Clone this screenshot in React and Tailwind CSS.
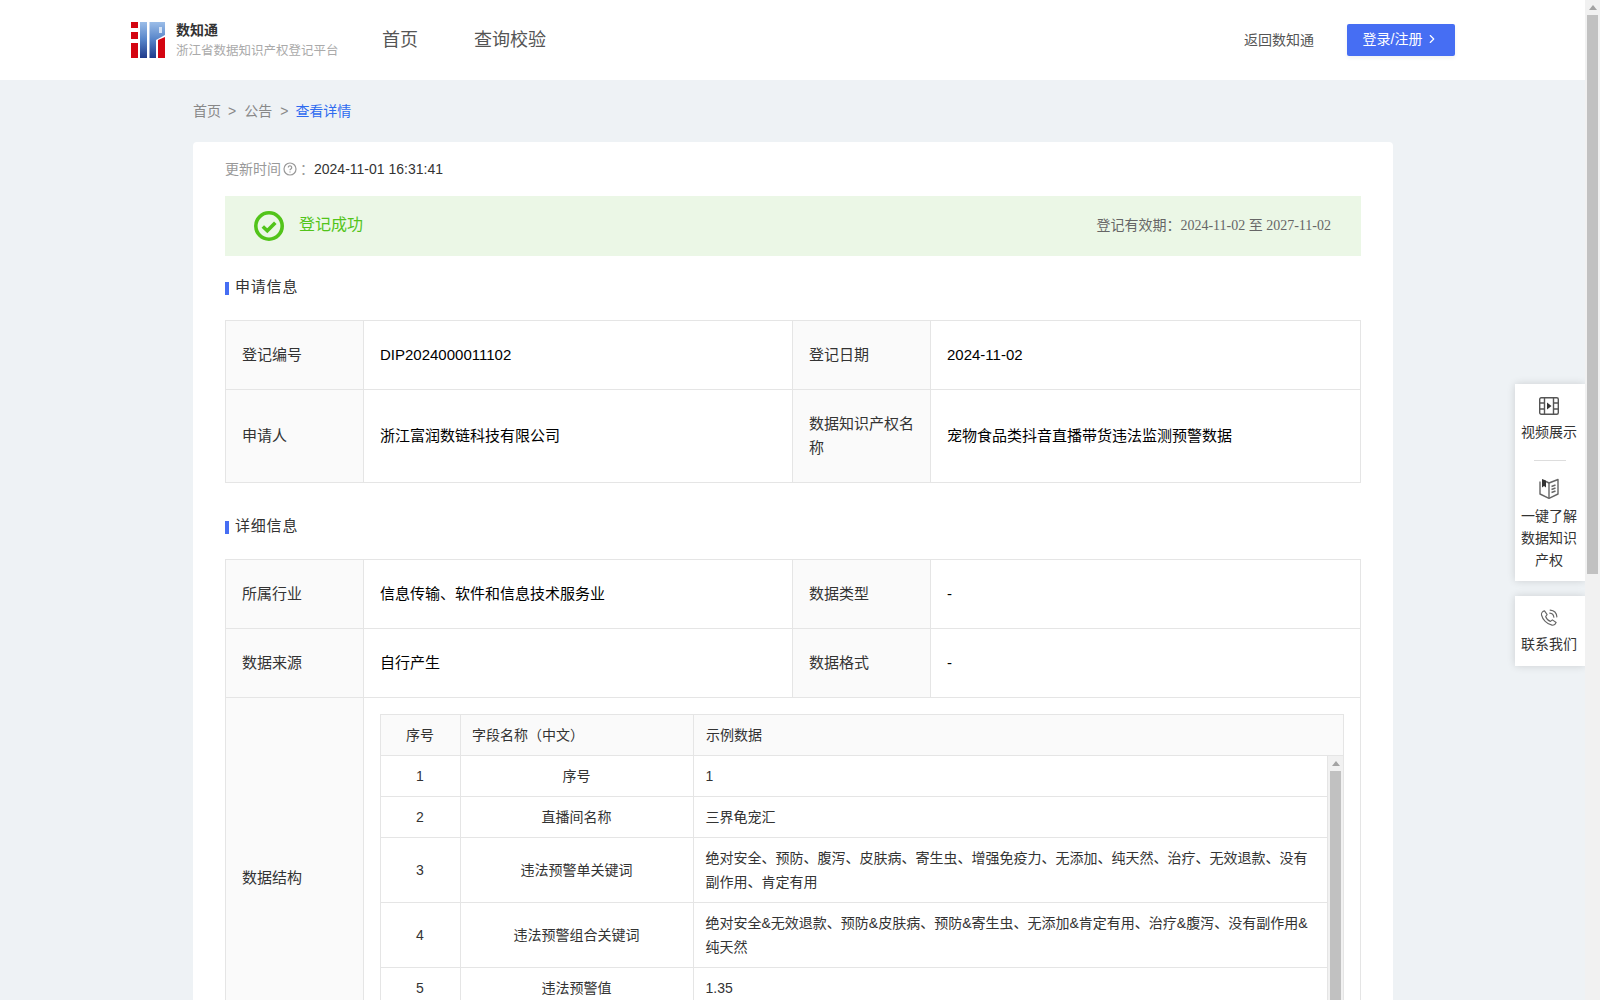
import { ChevronRight } from 'lucide-react';

const sans = 'font-["Liberation_Sans","Noto_Sans_CJK_SC",sans-serif]';

const infoRows = [
  { labelA: '登记编号', valueA: 'DIP2024000011102', labelB: '登记日期', valueB: '2024-11-02', height: 'h-[69px]' },
  { labelA: '申请人', valueA: '浙江富润数链科技有限公司', labelB: '数据知识产权名称', valueB: '宠物食品类抖音直播带货违法监测预警数据', height: 'h-[92px]' },
];

const detailRows = [
  { labelA: '所属行业', valueA: '信息传输、软件和信息技术服务业', labelB: '数据类型', valueB: '-', height: 'h-[69px]' },
  { labelA: '数据来源', valueA: '自行产生', labelB: '数据格式', valueB: '-', height: 'h-[69px]' },
];

const fieldRows = [
  { no: '1', name: '序号', sample: '1', height: 'h-[41px]' },
  { no: '2', name: '直播间名称', sample: '三界龟宠汇', height: 'h-[41px]' },
  { no: '3', name: '违法预警单关键词', sample: '绝对安全、预防、腹泻、皮肤病、寄生虫、增强免疫力、无添加、纯天然、治疗、无效退款、没有副作用、肯定有用', height: 'h-[65px]' },
  { no: '4', name: '违法预警组合关键词', sample: '绝对安全&无效退款、预防&皮肤病、预防&寄生虫、无添加&肯定有用、治疗&腹泻、没有副作用&纯天然', height: 'h-[65px]' },
  { no: '5', name: '违法预警值', sample: '1.35', height: 'h-[41px]' },
];

function LogoMark() {
  return (
    <svg width="34" height="36" viewBox="0 0 34 36">
      <defs>
        <linearGradient id="logoBlue" x1="0" y1="0" x2="0" y2="1">
          <stop offset="0" stopColor="#9bbde8" />
          <stop offset="0.5" stopColor="#5583c8" />
          <stop offset="1" stopColor="#1f3a8a" />
        </linearGradient>
        <linearGradient id="logoBowl" gradientUnits="userSpaceOnUse" x1="0" y1="0" x2="0" y2="36">
          <stop offset="0" stopColor="#9bbde8" />
          <stop offset="0.5" stopColor="#5583c8" />
          <stop offset="1" stopColor="#1f3a8a" />
        </linearGradient>
      </defs>
      <rect x="0" y="0" width="7" height="6" fill="#d40511" />
      <rect x="0" y="10" width="7" height="7" fill="#d40511" />
      <rect x="0" y="21" width="7" height="15" fill="#d40511" />
      <rect x="9" y="0" width="7" height="36" fill="url(#logoBlue)" />
      <rect x="18.500" y="0" width="6.500" height="36" fill="url(#logoBlue)" />
      <path d="M25 0h9v13l-9 5z" fill="url(#logoBowl)" />
      <rect x="28" y="5" width="3" height="6" fill="#d5e3f6" />
      <path d="M27 36V18l7-3v21z" fill="#d40511" />
    </svg>
  );
}

function SectionTitle({ children }) {
  return (
    <div className="flex items-center h-[24px] text-[15px] text-[#333] tracking-[0.8px]">
      <span className="w-[4px] h-[13px] bg-[#466ef3] mr-[6px] mt-[2px]" />
      {children}
    </div>
  );
}

function KvRow({ row, last }) {
  const border = last ? '' : 'border-b border-[#e5e5e5]';
  return (
    <div className={`grid grid-cols-[138px_429px_138px_1fr] ${row.height} ${border} text-[15px] leading-[24px]`}>
      <div className="flex items-center px-[16px] pb-[1px] bg-[#fafafa] border-r border-[#e5e5e5] text-[#333]">{row.labelA}</div>
      <div className="flex items-center px-[16px] pb-[1px] border-r border-[#e5e5e5] text-black">{row.valueA}</div>
      <div className="flex items-center px-[16px] pb-[1px] bg-[#fafafa] border-r border-[#e5e5e5] text-[#333]">{row.labelB}</div>
      <div className="flex items-center px-[16px] pb-[1px] text-black">{row.valueB}</div>
    </div>
  );
}

function FieldTable() {
  return (
    <div className="border border-[#e5e5e5] border-b-0 text-[#333]">
      <div className="grid grid-cols-[80px_233px_1fr] h-[41px] bg-[#fafafa] border-b border-[#e5e5e5]">
        <div className="flex items-center justify-center pr-[1px] border-r border-[#e5e5e5]">序号</div>
        <div className="flex items-center px-[11px] border-r border-[#e5e5e5]">字段名称（中文）</div>
        <div className="flex items-center px-[12px]">示例数据</div>
      </div>
      <div className="flex h-[285px] overflow-hidden">
        <div className="flex-1 border-r border-[#e5e5e5]">
          {fieldRows.map((row) => (
            <div key={row.no} className={`grid grid-cols-[80px_233px_1fr] ${row.height} border-b border-[#e5e5e5]`}>
              <div className="flex items-center justify-center pr-[1px] border-r border-[#e5e5e5]">{row.no}</div>
              <div className="flex items-center justify-center pr-[1px] border-r border-[#e5e5e5]">{row.name}</div>
              <div className="flex items-center pl-[11.5px] pr-[11px] pb-[1px] leading-[24px]">{row.sample}</div>
            </div>
          ))}
        </div>
        <div className="w-[15px] bg-[#f1f1f1] flex flex-col items-center">
          <div className="h-[15px] flex items-center justify-center">
            <span className="border-x-[4px] border-x-transparent border-b-[5px] border-b-[#a3a3a3]" />
          </div>
          <div className="w-[11px] flex-1 bg-[#c1c1c1]" />
        </div>
      </div>
    </div>
  );
}

function SideItem({ icon, children }) {
  return (
    <div className="flex flex-col items-center text-[14px] leading-[22px] text-[#333] text-center pl-[5px] pr-[7px]">
      {icon}
      <div className="mt-[6px]">{children}</div>
    </div>
  );
}

function SidePanel() {
  return (
    <div className="absolute right-0 top-[384px] w-[70px]">
      <div className="bg-white shadow-[0_0_8px_rgba(0,0,0,0.14)] pt-[13px] pb-[10px]">
        <SideItem
          icon={
            <svg width="20" height="18" viewBox="0 0 20 18" fill="none" stroke="#555" strokeWidth="1.4">
              <rect x="0.7" y="0.7" width="18.6" height="16.6" rx="1.500" />
              <path d="M5.500 1v16M14.500 1v16M1 6h4.500M1 12h4.500M14.500 6H19M14.500 12H19" />
              <path d="M8 5.500l4.500 3.500L8 12.500z" fill="#333" stroke="none" />
            </svg>
          }
        >
          视频展示
        </SideItem>
        <div className="w-[32px] h-px bg-[#ddd] mx-auto mt-[17px] mb-[17px]" />
        <SideItem
          icon={
            <svg width="20" height="21" viewBox="0 0 20 21" fill="none" stroke="#666" strokeWidth="1.4" strokeLinejoin="round">
              <path d="M1 3.500V16l9 4.300 9-4.300V1.500L10 5 7 3.500" />
              <path d="M10 5v15" />
              <path d="M3 1l4 1.500v7L5 8 3 9.500z" fill="#333" stroke="none" />
              <path d="M12.500 8.500l4-1.500M12.500 11.500l4-1.500M12.500 14.500l4-1.500" />
            </svg>
          }
        >
          一键了解<br />数据知识<br />产权
        </SideItem>
      </div>
      <div className="bg-white shadow-[0_0_8px_rgba(0,0,0,0.14)] mt-[15px] pt-[13px] pb-[11px]">
        <SideItem
          icon={
            <svg width="18" height="18" viewBox="0 0 24 24" fill="none" stroke="#666" strokeWidth="1.500" strokeLinecap="round" strokeLinejoin="round">
              <path d="M6 2.500l3.500 5-2 2.500c1 3 3.500 5.500 6.500 6.500l2.500-2 5 3.500c-1 2.500-3 4-5.500 3.500C9 20 3.500 14 2 8 1.500 5.500 3.500 3 6 2.500z" />
              <path d="M13 5.500c3 .3 5.200 2.500 5.500 5.500M13.500 1.500c5 .4 8.600 4 9 9" />
            </svg>
          }
        >
          联系我们
        </SideItem>
      </div>
    </div>
  );
}

export default function App() {
  return (
    <div className={`h-screen overflow-hidden flex bg-[#eef2f5] text-[14px] ${sans}`}>
      <div className="flex-1 relative overflow-hidden">
        <header className="h-[80px] bg-white flex items-center pl-[131px] pr-[130px]">
          <LogoMark />
          <div className="ml-[11px] w-[166px]">
            <div className="text-[14px] leading-[20px] text-[#333] font-bold">数知通</div>
            <div className="text-[12.500px] leading-[20px] text-[#aaa] whitespace-nowrap mt-[1px]">浙江省数据知识产权登记平台</div>
          </div>
          <nav className="flex ml-[40px] gap-[56px] text-[18px] text-[#555]">
            <span>首页</span>
            <span>查询校验</span>
          </nav>
          <div className="ml-auto flex items-center gap-[33px]">
            <span className="text-[#555]">返回数知通</span>
            <button className="w-[108px] h-[32px] pb-[2px] rounded-[2px] bg-[#466ef3] text-white flex items-center justify-center shadow-[0_2px_4px_rgba(0,0,0,0.06)]">
              登录/注册
              <ChevronRight size={14} className="ml-[3px]" />
            </button>
          </div>
        </header>

        <main className="w-[1200px] ml-[193px]">
          <div className="h-[62px] flex items-center text-[#888]">
            <span>首页</span>
            <span className="ml-[7px] mr-[8px]">&gt;</span>
            <span>公告</span>
            <span className="ml-[8px] mr-[7px]">&gt;</span>
            <span className="text-[#2e6bf0]">查看详情</span>
          </div>

          <div className="bg-white rounded-[4px] px-[32px] pt-[16px] pb-[40px]">
            <div className="flex items-center h-[22px] leading-[22px]">
              <span className="text-[#999]">更新时间</span>
              <svg className="ml-[2px] mr-[3px]" width="14" height="14" viewBox="0 0 14 14" fill="none" stroke="#999" strokeWidth="1.200">
                <circle cx="7" cy="7" r="6" />
                <path d="M5.300 5.500a1.700 1.700 0 1 1 2.600 1.400c-.6.4-.9.700-.9 1.400" />
                <path d="M7 9.500v1" />
              </svg>
              <span className="text-[#999]">：</span>
              <span className="text-[#333]">2024-11-01 16:31:41</span>
            </div>

            <div className="mt-[16px] h-[60px] bg-[#ebf7e6] flex items-center pl-[29px] pr-[30px]">
              <svg width="30" height="30" viewBox="0 0 30 30" fill="none" stroke="#52c41a">
                <circle cx="15" cy="15" r="13.200" strokeWidth="3.600" />
                <path d="M8.800 15.500l4.500 4.200 8-8" strokeWidth="3.600" />
              </svg>
              <span className="ml-[15px] pb-[2px] text-[16px] text-[#52c41a]">登记成功</span>
              <span className="ml-auto pb-[2px] text-[#666]">
                登记有效期：
                <span className="font-['Liberation_Serif','Noto_Sans_CJK_SC',serif]">2024-11-02 至 2027-11-02</span>
              </span>
            </div>

            <div className="mt-[19px]">
              <SectionTitle>申请信息</SectionTitle>
            </div>
            <div className="mt-[21px] border border-[#e5e5e5]">
              {infoRows.map((row, i) => (
                <KvRow key={row.labelA} row={row} last={i === infoRows.length - 1} />
              ))}
            </div>

            <div className="mt-[31px]">
              <SectionTitle>详细信息</SectionTitle>
            </div>
            <div className="mt-[21px] border border-[#e5e5e5]">
              {detailRows.map((row) => (
                <KvRow key={row.labelA} row={row} />
              ))}
              <div className="grid grid-cols-[138px_1fr]">
                <div className="flex items-center px-[16px] bg-[#fafafa] border-r border-[#e5e5e5] text-[15px] leading-[24px] text-[#333]">数据结构</div>
                <div className="p-[16px]">
                  <FieldTable />
                </div>
              </div>
            </div>
          </div>
        </main>

        <SidePanel />
      </div>

      <div className="w-[15px] bg-[#f1f1f1] flex flex-col items-center">
        <div className="h-[15px] flex items-center justify-center">
          <span className="border-x-[4px] border-x-transparent border-b-[5px] border-b-[#a3a3a3]" />
        </div>
        <div className="w-[11px] h-[559px] bg-[#c1c1c1]" />
      </div>
    </div>
  );
}
